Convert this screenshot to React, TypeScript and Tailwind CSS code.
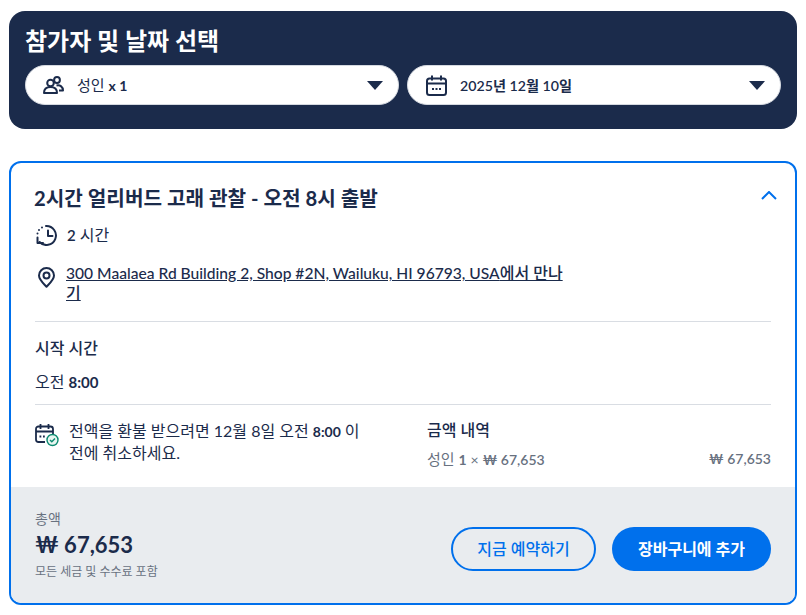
const font = '[font-family:Lato,"Noto_Sans_CJK_KR",sans-serif]';

function CaretDown() {
    return (
        <svg width="16" height="9" viewBox="0 0 16 9">
            <path d="M0 0h16L8 9z" fill="#1b2b4b" />
        </svg>
    );
}

function PeopleIcon() {
    return (
        <svg width="21" height="18" viewBox="0 0 21 18" fill="none" stroke="#1b2b4b" strokeWidth="2" strokeLinejoin="round">
            <circle cx="7.500" cy="7" r="3.300" />
            <circle cx="14" cy="4" r="2.900" />
            <path d="M1 17c0-4 2.500-6 6.500-6s6.500 2 6.500 6z" />
            <path d="M13.500 9.500c3.800-.8 6.500 1.500 6.500 5h-4" />
        </svg>
    );
}

function CalendarIcon() {
    return (
        <svg width="21" height="21" viewBox="0 0 21 21" fill="none" stroke="#1b2b4b" strokeWidth="2">
            <rect x="1" y="3.500" width="19" height="16.500" rx="2.500" />
            <path d="M1 8.500h19M6 0.500v5M15 0.500v5" />
            <path d="M6 14h2M9.500 14h2M13 14h2" />
        </svg>
    );
}

function HistoryIcon() {
    return (
        <svg width="22" height="22" viewBox="0 0 22 22" fill="none" stroke="#1b2b4b" strokeWidth="2">
            <path d="M10 2a9.500 9.500 0 1 1-6.500 16" strokeLinecap="round" />
            <path d="M12 6.500V12h4.500" strokeLinecap="round" strokeLinejoin="round" />
            <path d="M1.500 13.500v5.500h5.500" strokeLinecap="round" strokeLinejoin="round" />
            <path d="M6 3.500v.1M3 6v.1M1.500 9.500v.1" strokeLinecap="round" strokeWidth="2" />
        </svg>
    );
}

function PinIcon() {
    return (
        <svg width="17" height="21" viewBox="0 0 17 21" fill="none" stroke="#1b2b4b" strokeWidth="2">
            <path d="M8.500 19.800C4.500 15.500 1 12.500 1 8.500a7.500 7.500 0 0 1 15 0c0 4-3.500 7-7.500 11.300z" strokeLinejoin="round" />
            <circle cx="8.500" cy="8.500" r="3" />
        </svg>
    );
}

function RefundIcon() {
    return (
        <svg width="24" height="24" viewBox="0 0 24 24" fill="none">
            <path d="M10 19H3.500A2.500 2.500 0 0 1 1 16.500V6a2.500 2.500 0 0 1 2.500-2.500h12A2.500 2.500 0 0 1 18 6v5" stroke="#1b2b4b" strokeWidth="1.800" />
            <path d="M1 8.500h17M5.500 1v5M13.500 1v5" stroke="#1b2b4b" strokeWidth="1.800" />
            <path d="M4.500 13.500h1.800M8 13.500h1.800" stroke="#1b2b4b" strokeWidth="1.800" />
            <circle cx="17.500" cy="17" r="5.500" fill="#e8f6f1" stroke="#0c8a70" strokeWidth="1.400" />
            <path d="M15 17l1.800 1.800 3.200-3.300" stroke="#0c8a70" strokeWidth="1.400" />
        </svg>
    );
}

function Select({ icon, children }: { icon: React.ReactNode; children: React.ReactNode }) {
    return (
        <div className="flex-1 h-10 bg-white rounded-[20px] border border-[#d5d9e0] flex items-center pl-[17px] pr-[15px]">
            <span className="w-[35px] shrink-0 flex items-center">{icon}</span>
            <span className="flex-1 text-[15px] text-[#1b2b4b]">{children}</span>
            <CaretDown />
        </div>
    );
}

export default function App() {
    return (
        <div className={`${font} w-[806px] h-[615px] bg-white pt-[11px] px-[9px] text-[#1b2b4b] overflow-hidden`}>
            {/* Participants + date */}
            <div className="h-[118px] bg-[#1b2b4b] rounded-2xl px-4 pt-[14px]">
                <h2 className="text-[24px] leading-[32px] font-bold text-white mb-2">참가자 및 날짜 선택</h2>
                <div className="flex gap-2">
                    <Select icon={<PeopleIcon />}>
                        <span className="-ml-px">성인</span> <span className="font-bold text-sm">x 1</span>
                    </Select>
                    <Select icon={<span className="pl-px"><CalendarIcon /></span>}>
                        <span className="font-semibold text-[14.200px]">2025년 12월 10일</span>
                    </Select>
                </div>
            </div>

            {/* Option card */}
            <div className="mt-8 h-[444px] rounded-xl border-2 border-[#0070ec] flex flex-col overflow-hidden">
                <div className="flex-1 px-[24px] pt-[21px] text-base">
                    <div className="flex items-start justify-between">
                        <h3 className="text-[20.200px] leading-7 font-bold -ml-px">2시간 얼리버드 고래 관찰 - 오전 8시 출발</h3>
                        <svg width="16" height="9" viewBox="0 0 16 9" fill="none" stroke="#0070ec" strokeWidth="2" className="mt-[7px] -mr-[6px]">
                            <path d="M1 8l7-7 7 7" />
                        </svg>
                    </div>
                    <div className="flex items-center gap-[9px] mt-3 h-[22px] ml-px">
                        <HistoryIcon />
                        <span className="leading-5"><span className="font-semibold text-[15px]">2</span> 시간</span>
                    </div>
                    <div className="flex gap-[11px] mt-[17px] leading-[20px] h-[43px] pl-[3px]">
                        <span className="pt-1 shrink-0"><PinIcon /></span>
                        <a className="underline w-[505px] font-medium [line-break:anywhere]"><span className="text-[15.600px]">300 Maalaea Rd Building 2, Shop #2N, Wailuku, HI 96793, USA</span>에서 만나기</a>
                    </div>
                    <div className="border-t border-[#d9dde3] mt-[15px]" />
                    <div className="font-medium mt-4 leading-5">시작 시간</div>
                    <div className="mt-[14px] leading-5">오전 <span className="font-bold text-[15px]">8:00</span></div>
                    <div className="border-t border-[#d9dde3] mt-3" />
                    <div className="flex mt-[15px]">
                        <div className="w-[392px] flex gap-[10px] shrink-0">
                            <span className="pt-[3px] shrink-0"><RefundIcon /></span>
                            <p className="w-[296px] leading-[22px]">전액을 환불 받으려면 12월 8일 오전 <span className="font-bold text-sm">8:00</span> 이전에 취소하세요.</p>
                        </div>
                        <div className="flex-1">
                            <div className="font-medium leading-5">금액 내역</div>
                            <div className="flex justify-between mt-[9px] text-[15px] leading-5 text-[#68717f]">
                                <span>성인 <span className="font-bold text-sm">1</span> <span className="text-sm">×</span> <span className="font-semibold text-sm">₩ 67,653</span></span>
                                <span className="font-semibold text-sm">₩ 67,653</span>
                            </div>
                        </div>
                    </div>
                </div>

                {/* Footer */}
                <div className="h-[116px] bg-[#e9ecef] px-[24px] flex items-center justify-between">
                    <div>
                        <div className="text-sm leading-4 text-[#68717f]">총액</div>
                        <div className="text-[22px] leading-8 font-bold mt-[2px]">₩ 67,653</div>
                        <div className="text-xs leading-4 text-[#68717f] mt-[3px]">모든 세금 및 수수료 포함</div>
                    </div>
                    <div className="flex gap-4 mt-2">
                        <button className="h-11 w-[145px] rounded-full border-2 border-[#0070ec] text-[#0070ec] text-base font-medium">지금 예약하기</button>
                        <button className="h-11 w-[159px] rounded-full bg-[#0070ec] text-white text-base font-semibold">장바구니에 추가</button>
                    </div>
                </div>
            </div>
        </div>
    );
}
